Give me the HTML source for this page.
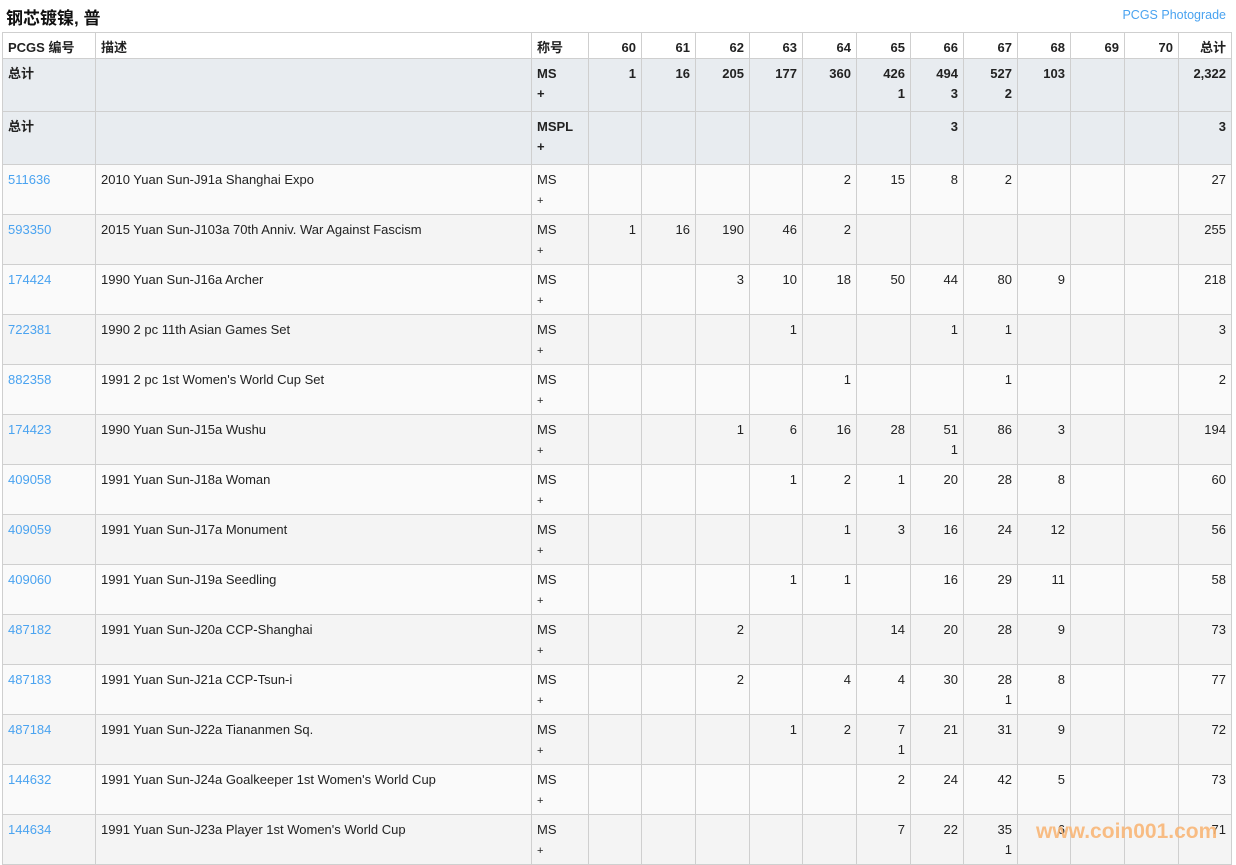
<!DOCTYPE html>
<html><head><meta charset="utf-8"><style>
body{margin:0;background:#fff;font-family:"Liberation Sans","Noto Sans CJK SC",sans-serif;font-size:13px;color:#222;width:1236px;height:862px;overflow:hidden;position:relative}
h1{position:absolute;left:6px;top:4px;margin:0;font-size:17px;font-weight:bold;color:#111}
.pg{position:absolute;right:10px;top:8px;color:#4aa3f0;font-size:12.5px}
table{position:absolute;left:2px;top:32px;border-collapse:collapse;table-layout:fixed;width:1230px}
td,th{border:1px solid #cfcfcf;padding:5px 5px 0 5px;vertical-align:top;line-height:20px;overflow:hidden;white-space:nowrap}
th{height:20px;text-align:right;font-weight:bold;background:#fff;padding-top:5px}
th.l,td.l{text-align:left}
td{text-align:right}
tr.t td{background:#e8ecf0;font-weight:bold;height:47px;padding-top:5px}
tr.d td{height:44px;padding-top:5px}
tr.d:nth-child(odd) td{background:#f4f4f4}
tr.d:nth-child(even) td{background:#fafafa}
a{color:#4aa3f0;text-decoration:none}
.p{font-size:11px}
.wm{position:absolute;left:1036px;top:820px;color:#f9b777;font-weight:bold;font-size:21px;opacity:.9}
</style></head><body>
<h1>钢芯镀镍, 普</h1>
<div class="pg">PCGS Photograde</div>
<table>
<colgroup><col style="width:93px"><col style="width:436px"><col style="width:57px"><col style="width:53px"><col style="width:54px"><col style="width:54px"><col style="width:53px"><col style="width:54px"><col style="width:54px"><col style="width:53px"><col style="width:54px"><col style="width:53px"><col style="width:54px"><col style="width:54px"><col style="width:53px"></colgroup>
<tr><th class="l">PCGS 编号</th><th class="l">描述</th><th class="l">称号</th><th>60</th><th>61</th><th>62</th><th>63</th><th>64</th><th>65</th><th>66</th><th>67</th><th>68</th><th>69</th><th>70</th><th>总计</th></tr>
<tr class="t"><td class="l">总计</td><td></td><td class="l">MS<br>+</td><td>1</td><td>16</td><td>205</td><td>177</td><td>360</td><td>426<br>1</td><td>494<br>3</td><td>527<br>2</td><td>103</td><td></td><td></td><td>2,322</td></tr>
<tr class="t"><td class="l">总计</td><td></td><td class="l">MSPL<br>+</td><td></td><td></td><td></td><td></td><td></td><td></td><td>3</td><td></td><td></td><td></td><td></td><td>3</td></tr>
<tr class="d"><td class="l"><a>511636</a></td><td class="l">2010 Yuan Sun-J91a Shanghai Expo</td><td class="l">MS<br><span class="p">+</span></td><td></td><td></td><td></td><td></td><td>2</td><td>15</td><td>8</td><td>2</td><td></td><td></td><td></td><td>27</td></tr>
<tr class="d"><td class="l"><a>593350</a></td><td class="l">2015 Yuan Sun-J103a 70th Anniv. War Against Fascism</td><td class="l">MS<br><span class="p">+</span></td><td>1</td><td>16</td><td>190</td><td>46</td><td>2</td><td></td><td></td><td></td><td></td><td></td><td></td><td>255</td></tr>
<tr class="d"><td class="l"><a>174424</a></td><td class="l">1990 Yuan Sun-J16a Archer</td><td class="l">MS<br><span class="p">+</span></td><td></td><td></td><td>3</td><td>10</td><td>18</td><td>50</td><td>44</td><td>80</td><td>9</td><td></td><td></td><td>218</td></tr>
<tr class="d"><td class="l"><a>722381</a></td><td class="l">1990 2 pc 11th Asian Games Set</td><td class="l">MS<br><span class="p">+</span></td><td></td><td></td><td></td><td>1</td><td></td><td></td><td>1</td><td>1</td><td></td><td></td><td></td><td>3</td></tr>
<tr class="d"><td class="l"><a>882358</a></td><td class="l">1991 2 pc 1st Women's World Cup Set</td><td class="l">MS<br><span class="p">+</span></td><td></td><td></td><td></td><td></td><td>1</td><td></td><td></td><td>1</td><td></td><td></td><td></td><td>2</td></tr>
<tr class="d"><td class="l"><a>174423</a></td><td class="l">1990 Yuan Sun-J15a Wushu</td><td class="l">MS<br><span class="p">+</span></td><td></td><td></td><td>1</td><td>6</td><td>16</td><td>28</td><td>51<br>1</td><td>86</td><td>3</td><td></td><td></td><td>194</td></tr>
<tr class="d"><td class="l"><a>409058</a></td><td class="l">1991 Yuan Sun-J18a Woman</td><td class="l">MS<br><span class="p">+</span></td><td></td><td></td><td></td><td>1</td><td>2</td><td>1</td><td>20</td><td>28</td><td>8</td><td></td><td></td><td>60</td></tr>
<tr class="d"><td class="l"><a>409059</a></td><td class="l">1991 Yuan Sun-J17a Monument</td><td class="l">MS<br><span class="p">+</span></td><td></td><td></td><td></td><td></td><td>1</td><td>3</td><td>16</td><td>24</td><td>12</td><td></td><td></td><td>56</td></tr>
<tr class="d"><td class="l"><a>409060</a></td><td class="l">1991 Yuan Sun-J19a Seedling</td><td class="l">MS<br><span class="p">+</span></td><td></td><td></td><td></td><td>1</td><td>1</td><td></td><td>16</td><td>29</td><td>11</td><td></td><td></td><td>58</td></tr>
<tr class="d"><td class="l"><a>487182</a></td><td class="l">1991 Yuan Sun-J20a CCP-Shanghai</td><td class="l">MS<br><span class="p">+</span></td><td></td><td></td><td>2</td><td></td><td></td><td>14</td><td>20</td><td>28</td><td>9</td><td></td><td></td><td>73</td></tr>
<tr class="d"><td class="l"><a>487183</a></td><td class="l">1991 Yuan Sun-J21a CCP-Tsun-i</td><td class="l">MS<br><span class="p">+</span></td><td></td><td></td><td>2</td><td></td><td>4</td><td>4</td><td>30</td><td>28<br>1</td><td>8</td><td></td><td></td><td>77</td></tr>
<tr class="d"><td class="l"><a>487184</a></td><td class="l">1991 Yuan Sun-J22a Tiananmen Sq.</td><td class="l">MS<br><span class="p">+</span></td><td></td><td></td><td></td><td>1</td><td>2</td><td>7<br>1</td><td>21</td><td>31</td><td>9</td><td></td><td></td><td>72</td></tr>
<tr class="d"><td class="l"><a>144632</a></td><td class="l">1991 Yuan Sun-J24a Goalkeeper 1st Women's World Cup</td><td class="l">MS<br><span class="p">+</span></td><td></td><td></td><td></td><td></td><td></td><td>2</td><td>24</td><td>42</td><td>5</td><td></td><td></td><td>73</td></tr>
<tr class="d"><td class="l"><a>144634</a></td><td class="l">1991 Yuan Sun-J23a Player 1st Women's World Cup</td><td class="l">MS<br><span class="p">+</span></td><td></td><td></td><td></td><td></td><td></td><td>7</td><td>22</td><td>35<br>1</td><td>6</td><td></td><td></td><td>71</td></tr>
</table>
<div class="wm">www.coin001.com</div>
</body></html>
